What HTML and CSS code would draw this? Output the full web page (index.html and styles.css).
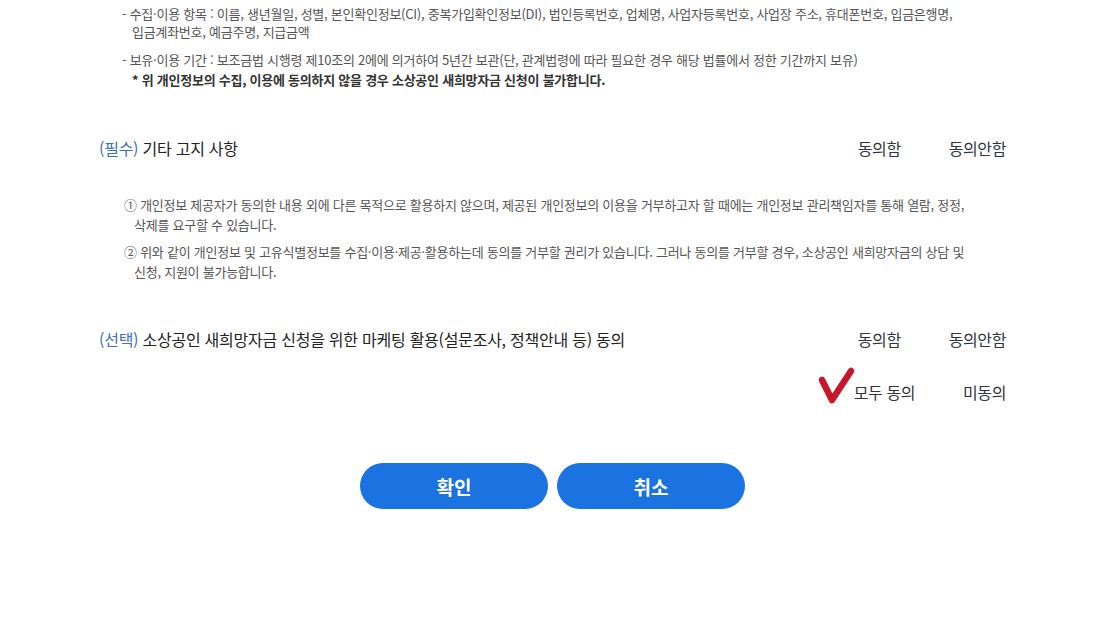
FILE: index.html
```html
<!DOCTYPE html>
<html lang="ko">
<head>
    <meta charset="UTF-8">
    <meta name="viewport" content="width=device-width, initial-scale=1.0">
    <title>개인정보 수집·이용 동의</title>
    <link rel="stylesheet" href="styles.css">
</head>
<body>

    <div class="agree-wrap">
        <!-- 수집·이용 안내 -->
        <div class="terms">
            <p class="item">- 수집·이용 항목 : 이름, 생년월일, 성별, 본인확인정보(CI), 중복가입확인정보(DI), 법인등록번호, 업체명, 사업자등록번호, 사업장 주소, 휴대폰번호, 입금은행명,<br><span class="cont">입금계좌번호, 예금주명, 지급금액</span></p>
            <p class="item gap">- 보유·이용 기간 : 보조금법 시행령 제10조의 2에에 의거하여 5년간 보관(단, 관계법령에 따라 필요한 경우 해당 법률에서 정한 기간까지 보유)</p>
            <p class="note">* 위 개인정보의 수집, 이용에 동의하지 않을 경우 소상공인 새희망자금 신청이 불가합니다.</p>
        </div>

        <!-- 필수 항목 -->
        <div class="agree-row first">
            <div class="agree-title"><span class="tag">(필수)</span> 기타 고지 사항</div>
            <div class="options">
                <span>동의함</span>
                <span>동의안함</span>
            </div>
        </div>

        <div class="notice">
            <p class="num">① 개인정보 제공자가 동의한 내용 외에 다른 목적으로 활용하지 않으며, 제공된 개인정보의 이용을 거부하고자 할 때에는 개인정보 관리책임자를 통해 열람, 정정,<br><span class="cont">삭제를 요구할 수 있습니다.</span></p>
            <p class="num gap">② 위와 같이 개인정보 및 고유식별정보를 수집·이용·제공·활용하는데 동의를 거부할 권리가 있습니다. 그러나 동의를 거부할 경우, 소상공인 새희망자금의 상담 및<br><span class="cont">신청, 지원이 불가능합니다.</span></p>
        </div>

        <!-- 선택 항목 -->
        <div class="agree-row second">
            <div class="agree-title"><span class="tag">(선택)</span> 소상공인 새희망자금 신청을 위한 마케팅 활용(설문조사, 정책안내 등) 동의</div>
            <div class="options">
                <span>동의함</span>
                <span>동의안함</span>
            </div>
        </div>

        <div class="all-row">
            <div class="options">
                <span class="checked">
                    <svg class="check" width="38" height="38" viewBox="0 0 38 38">
                        <path d="M4 13 L14 33 L33 4" fill="none" stroke="#c8162c" stroke-width="6.5" stroke-linecap="round" stroke-linejoin="round"/>
                    </svg>
                    모두 동의
                </span>
                <span>미동의</span>
            </div>
        </div>
    </div>

    <div class="btn-area">
        <button type="button" class="btn">확인</button>
        <button type="button" class="btn">취소</button>
    </div>

</body>
</html>
```

FILE: styles.css
```css
body {
    margin: 0;
    padding: 0;
    background-color: #fff;
    font-family: "Noto Sans CJK KR", "Noto Sans", sans-serif;
    color: #333;
}
p {
    margin: 0;
}
.agree-wrap {
    width: 907px;
    margin-left: 99px;
}
.terms {
    padding: 5px 0 0 23px;
    font-size: 13px;
    line-height: 18px;
    color: #555;
    letter-spacing: -0.25px;
}
.terms .gap {
    margin-top: 10px;
}
.terms .cont,
.notice .cont {
    padding-left: 10px;
}
.terms .note {
    margin-top: 2px;
    padding-left: 10px;
    font-weight: bold;
    color: #333;
}
.agree-row {
    display: flex;
    justify-content: space-between;
    align-items: center;
    line-height: 24px;
}
.agree-row.first {
    margin-top: 47px;
}
.agree-row.second {
    margin-top: 45px;
}
.agree-title {
    font-size: 16px;
    color: #222;
    letter-spacing: -0.25px;
}
.agree-title .tag {
    color: #3c70b8;
}
.options {
    display: flex;
    gap: 48px;
    font-size: 16px;
    color: #2f3440;
    letter-spacing: -0.4px;
}
.notice {
    margin-top: 35px;
    padding-left: 25px;
    font-size: 13px;
    line-height: 20px;
    color: #555;
    letter-spacing: -0.25px;
}
.notice .gap {
    margin-top: 7px;
}
.all-row {
    display: flex;
    justify-content: flex-end;
    margin-top: 29px;
    line-height: 24px;
}
.checked {
    position: relative;
}
.check {
    position: absolute;
    left: -36px;
    top: -13px;
}
.btn-area {
    display: flex;
    justify-content: center;
    gap: 9px;
    margin-top: 59px;
    padding-right: 13px;
}
.btn {
    width: 188px;
    height: 46px;
    border: none;
    border-radius: 23px;
    background-color: #1a73e1;
    color: #fff;
    font-family: "Noto Sans CJK KR", sans-serif;
    font-size: 19px;
    font-weight: bold;
    cursor: pointer;
}
```
